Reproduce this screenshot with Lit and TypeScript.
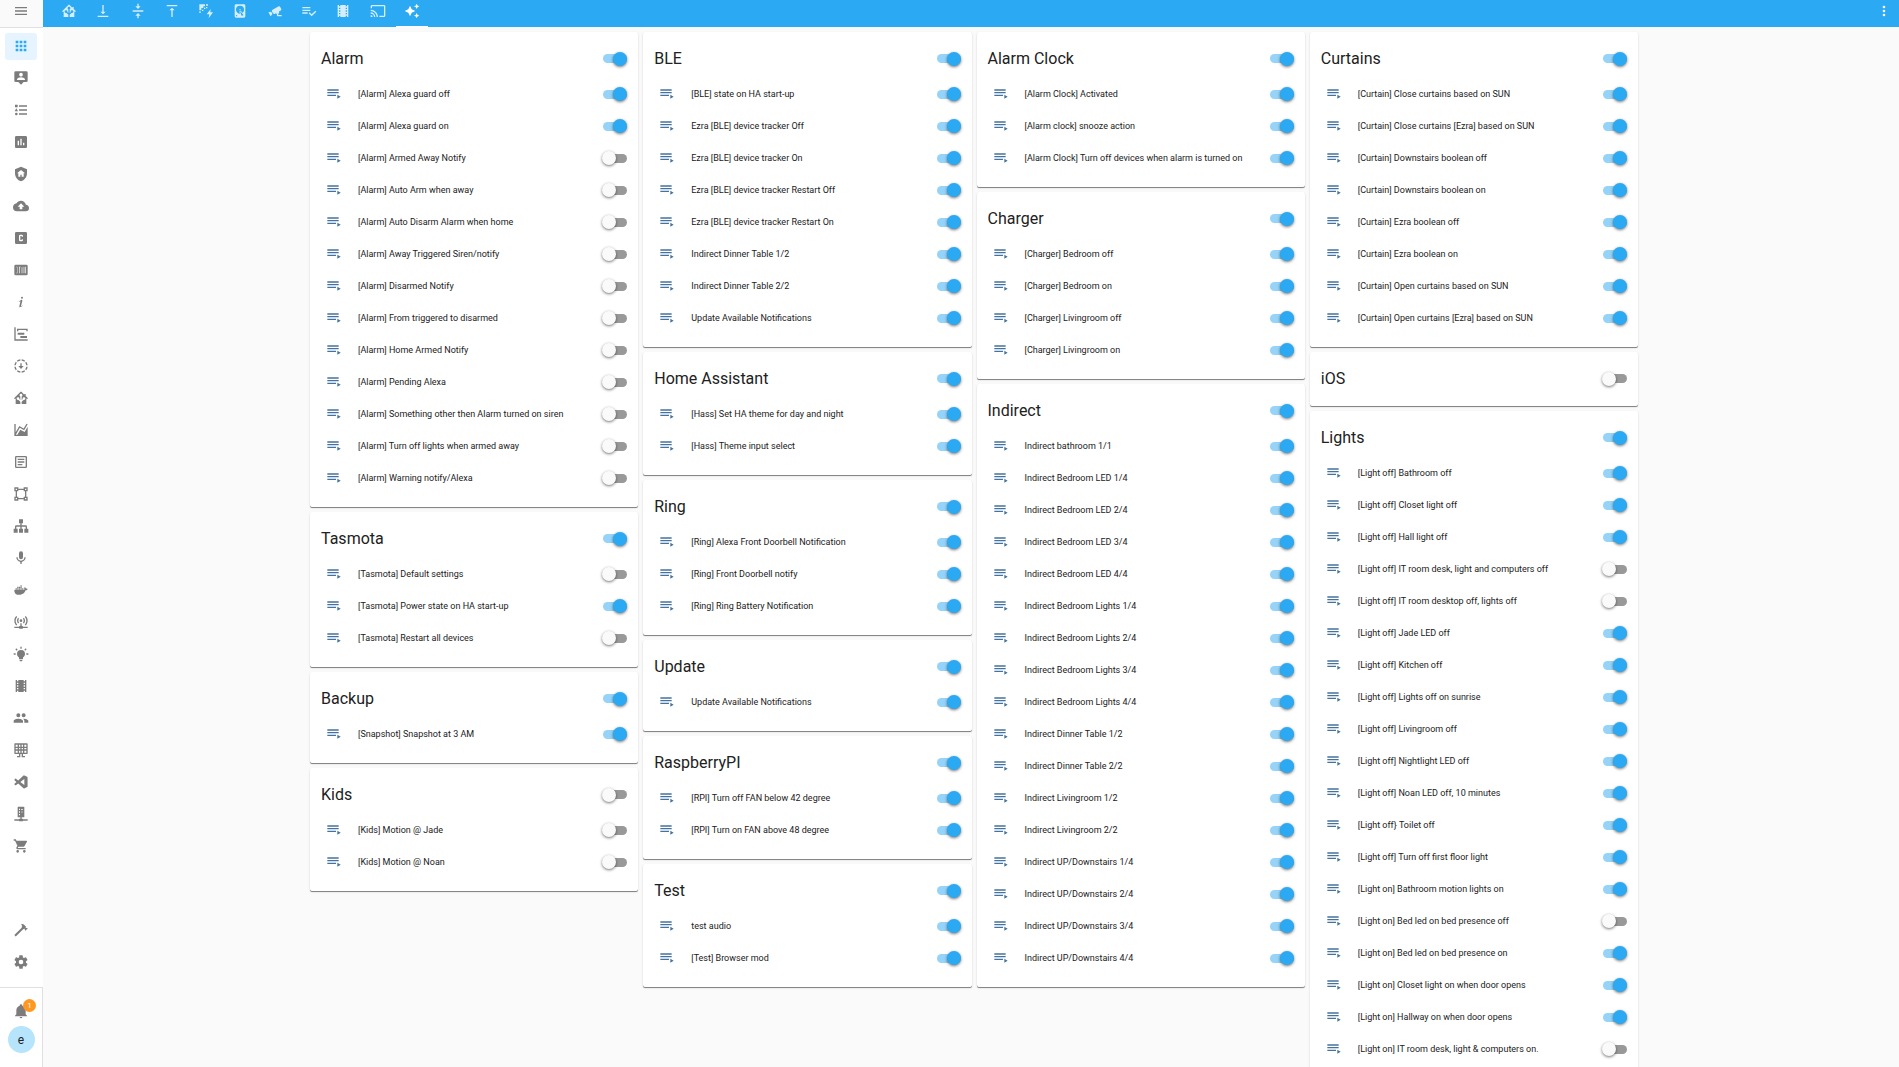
import { LitElement, html, css, svg } from "lit";
import { customElement, property, state } from "lit/decorators.js";

/* 24-unit icon shapes, keyed by name. */
const ICONS: Record<string, string> = {
  menu: "M3,6H21V8H3V6M3,11H21V13H3V11M3,16H21V18H3V16Z",
  apps: "M16,20H20V16H16M16,14H20V10H16M10,8H14V4H10M16,8H20V4H16M10,14H14V10H10M4,14H8V10H4M4,20H8V16H4M10,20H14V16H10M4,8H8V4H4V8Z",
  map: "M20,2H4A2,2 0 0,0 2,4V16A2,2 0 0,0 4,18H8L12,22L16,18H20A2,2 0 0,0 22,16V4A2,2 0 0,0 20,2M12,4.3C13.5,4.3 14.7,5.5 14.7,7C14.7,8.5 13.5,9.7 12,9.7C10.5,9.7 9.3,8.5 9.3,7C9.3,5.5 10.5,4.3 12,4.3M18,15H6V14.1C6,12.1 10,11 12,11C14,11 18,12.1 18,14.1V15Z",
  logbook: "M5,9.5L7.5,14H2.5L5,9.5M3,4H7V8H3V4M5,20A2,2 0 0,0 7,18A2,2 0 0,0 5,16A2,2 0 0,0 3,18A2,2 0 0,0 5,20M9,5V7H21V5H9M9,19H21V17H9V19M9,13H21V11H9V13Z",
  history: "M9,17H7V10H9V17M13,17H11V7H13V17M17,17H15V13H17V17M19,3H5C3.9,3 3,3.9 3,5V19C3,20.1 3.9,21 5,21H19C20.1,21 21,20.1 21,19V5C21,3.9 20.1,3 19,3Z",
  shield: "M11,13H13V16H16V11H18L12,6L6,11H8V16H11V13M12,1L21,5V11C21,16.55 17.16,21.74 12,23C6.84,21.74 3,16.55 3,11V5L12,1Z",
  upload: "M14,13V17H10V13H7L12,8L17,13H14M19.35,10.03C18.67,6.59 15.64,4 12,4C9.11,4 6.6,5.64 5.35,8.03C2.34,8.36 0,10.9 0,14A6,6 0 0,0 6,20H19A5,5 0 0,0 24,15C24,12.36 21.95,10.22 19.35,10.03Z",
  cbox: "M3,5A2,2 0 0,1 5,3H19A2,2 0 0,1 21,5V19A2,2 0 0,1 19,21H5A2,2 0 0,1 3,19V5M11,7A2,2 0 0,0 9,9V15A2,2 0 0,0 11,17H13A2,2 0 0,0 15,15V14H13V15H11V9H13V10H15V9A2,2 0 0,0 13,7H11Z",
  counter: "M4,4H20A2,2 0 0,1 22,6V18A2,2 0 0,1 20,20H4A2,2 0 0,1 2,18V6A2,2 0 0,1 4,4M5,7V8H6V16H5V17H6.6V7H5M9,7V17H10V8H11.4V7H9M13,7V17H14V8H13M16,7V17H17V7H16M18.4,7V17H19.4V7H18.4Z",
  info: "M13.5,4A1.5,1.5 0 0,0 12,5.5A1.5,1.5 0 0,0 13.5,7A1.5,1.5 0 0,0 15,5.5A1.5,1.5 0 0,0 13.5,4M13.14,8.77C11.95,8.87 8.7,11.46 8.7,11.46C8.5,11.61 8.56,11.6 8.72,11.88C8.88,12.15 8.86,12.17 9.05,12.04C9.25,11.91 9.58,11.7 10.13,11.36C12.25,10 10.47,13.14 9.56,18.43C9.2,21.05 11.56,19.7 12.17,19.3C12.77,18.91 14.38,17.8 14.54,17.69C14.76,17.54 14.6,17.42 14.43,17.17C14.31,17 14.19,17.12 14.19,17.12C13.54,17.55 12.35,18.45 12.19,17.88C12,17.31 13.22,13.4 13.89,10.71C14,10.07 14.3,8.67 13.14,8.77Z",
  gantt: "M2,2H4V20H22V22H2V2M7,10H17V13H7V10M11,15H21V18H11V15M6,4H22V8H20V6H8V8H6V4Z",
  progress: "M13,2.05V4.06C14.4,4.24 15.7,4.8 16.86,5.65L18.28,4.22C16.8,3 15,2.25 13,2.05M11,2.05C9,2.25 7.2,3 5.68,4.24L7.1,5.67C8.25,4.8 9.6,4.24 11,4.06V2.05M19.74,5.7L18.32,7.1C19.2,8.25 19.76,9.6 19.94,11H21.95C21.75,9 21,7.2 19.74,5.7M4.26,5.7C3,7.2 2.25,9 2.05,11H4.06C4.24,9.6 4.8,8.25 5.68,7.1L4.26,5.7M2.05,13C2.25,15 3,16.8 4.26,18.3L5.68,16.9C4.8,15.75 4.24,14.4 4.06,13H2.05M19.94,13C19.76,14.4 19.2,15.75 18.32,16.9L19.74,18.3C21,16.8 21.75,15 21.95,13H19.94M7.1,18.33L5.68,19.76C7.2,21 9,21.75 11,21.95V19.94C9.6,19.76 8.25,19.2 7.1,18.33M16.9,18.33C15.75,19.2 14.4,19.76 13,19.94V21.95C15,21.75 16.8,21 18.32,19.76L16.9,18.33M12,16.5L16,12H13V8H11V12H8L12,16.5Z",
  home: "M21.8,13H20V21H13V17.67L15.79,14.88L16.5,15C17.66,15 18.6,14.06 18.6,12.9C18.6,11.74 17.66,10.8 16.5,10.8A2.1,2.1 0 0,0 14.4,12.9L14.5,13.61L13,15.13V9.65C13.66,9.29 14.1,8.6 14.1,7.8A2.1,2.1 0 0,0 12,5.7A2.1,2.1 0 0,0 9.9,7.8C9.9,8.6 10.34,9.29 11,9.65V15.13L9.5,13.61L9.6,12.9A2.1,2.1 0 0,0 7.5,10.8A2.1,2.1 0 0,0 5.4,12.9A2.1,2.1 0 0,0 7.5,15L8.21,14.88L11,17.67V21H4V13H2.25C1.83,13 1.42,13 1.42,12.79C1.43,12.57 1.85,12.15 2.28,11.72L11,3C11.33,2.67 11.67,2.33 12,2.33C12.33,2.33 12.67,2.67 13,3L17,7V6H19V9L21.78,11.78C22.18,12.18 22.59,12.59 22.6,12.8C22.6,13 22.2,13 21.8,13Z",
  area: "M17.45,15.18L22,7.31V21H2V3H4V15.54L9.5,6L16,9.78L20.24,2.45L21.97,3.45L16.74,12.5L10.23,8.75L4.31,19H6.57L10.96,11.44L17.45,15.18Z",
  text: "M19,5V19H5V5H19M19,3H5A2,2 0 0,0 3,5V19A2,2 0 0,0 5,21H19A2,2 0 0,0 21,19V5A2,2 0 0,0 19,3M7,7H17V9H7V7M7,11H17V13H7V11M7,15H14V17H7V15Z",
  vector: "M2,2H8V4H16V2H22V8H20V16H22V22H16V20H8V22H2V16H4V8H2V2M16,8V6H8V8H6V16H8V18H16V16H18V8H16M4,4V6H6V4H4M18,4V6H20V4H18M4,18V20H6V18H4M18,18V20H20V18H18Z",
  sitemap: "M9,2V8H11V11H5C3.89,11 3,11.89 3,13V16H1V22H7V16H5V13H11V16H9V22H15V16H13V13H19V16H17V22H23V16H21V13C21,11.89 20.11,11 19,11H13V8H15V2H9Z",
  mic: "M12,2A3,3 0 0,1 15,5V11A3,3 0 0,1 12,14A3,3 0 0,1 9,11V5A3,3 0 0,1 12,2M19,11C19,14.53 16.39,17.44 13,17.93V21H11V17.93C7.61,17.44 5,14.53 5,11H7A5,5 0 0,0 12,16A5,5 0 0,0 17,11H19Z",
  docker: "M21.81,10.25C21.75,10.21 21.25,9.82 20.17,9.82C19.89,9.82 19.61,9.85 19.33,9.9C19.12,8.5 17.95,7.79 17.9,7.76L17.61,7.59L17.43,7.86C17.19,8.22 17,8.63 16.92,9.05C16.72,9.85 16.84,10.61 17.25,11.26C16.76,11.54 15.96,11.61 15.79,11.61H2.62C2.28,11.61 2,11.89 2,12.24C2,13.39 2.18,14.54 2.58,15.62C3.03,16.81 3.71,17.69 4.58,18.23C5.56,18.83 7.17,19.17 9,19.17C9.79,19.17 10.61,19.1 11.42,18.95C12.54,18.75 13.62,18.36 14.61,17.79C15.43,17.32 16.16,16.72 16.78,16C17.82,14.83 18.43,13.5 18.9,12.35H19.09C20.23,12.35 20.94,11.89 21.33,11.5C21.59,11.26 21.78,10.97 21.92,10.63L22,10.39L21.81,10.25M3.85,9.5H5.77V11.24H3.85V9.5M6.3,9.5H8.2V11.24H6.3V9.5M8.75,9.5H10.7V11.24H8.75V9.5M11.2,9.5H13.1V11.24H11.2V9.5M13.65,9.5H15.6V11.24H13.65V9.5M6.3,7.2H8.2V9H6.3V7.2M8.75,7.2H10.7V9H8.75V7.2M11.2,7.2H13.1V9H11.2V7.2M11.2,4.9H13.1V6.7H11.2V4.9Z",
  access: "M4.93,2.93C3.12,4.74 2,7.24 2,10C2,12.76 3.12,15.26 4.93,17.07L6.34,15.66C4.89,14.22 4,12.22 4,10C4,7.79 4.89,5.78 6.34,4.34L4.93,2.93M19.07,2.93L17.66,4.34C19.11,5.78 20,7.79 20,10C20,12.22 19.11,14.22 17.66,15.66L19.07,17.07C20.88,15.26 22,12.76 22,10C22,7.24 20.88,4.74 19.07,2.93M7.76,5.76C6.67,6.85 6,8.35 6,10C6,11.65 6.67,13.15 7.76,14.24L9.17,12.83C8.45,12.11 8,11.11 8,10C8,8.89 8.45,7.89 9.17,7.17L7.76,5.76M16.24,5.76L14.83,7.17C15.55,7.89 16,8.89 16,10C16,11.11 15.55,12.11 14.83,12.83L16.24,14.24C17.33,13.15 18,11.65 18,10C18,8.35 17.33,6.85 16.24,5.76M12,8A2,2 0 0,0 10,10A2,2 0 0,0 12,12A2,2 0 0,0 14,10A2,2 0 0,0 12,8M11,14V18H10A1,1 0 0,0 9,19H2V21H9A1,1 0 0,0 10,22H14A1,1 0 0,0 15,21H22V19H15A1,1 0 0,0 14,18H13V14H11Z",
  bulb: "M12,6A6,6 0 0,1 18,12C18,14.22 16.79,16.16 15,17.2V19A1,1 0 0,1 14,20H10A1,1 0 0,1 9,19V17.2C7.21,16.16 6,14.22 6,12A6,6 0 0,1 12,6M14,21V22A1,1 0 0,1 13,23H11A1,1 0 0,1 10,22V21H14M20,11H23V13H20V11M1,11H4V13H1V11M13,1V4H11V1H13M4.92,3.5L7.05,5.64L5.63,7.05L3.5,4.93L4.92,3.5M16.95,5.63L19.07,3.5L20.5,4.93L18.37,7.05L16.95,5.63Z",
  film: "M18,9H16V7H18M18,13H16V11H18M18,17H16V15H18M8,9H6V7H8M8,13H6V11H8M8,17H6V15H8M18,3V5H16V3H8V5H6V3H4V21H6V19H8V21H16V19H18V21H20V3H18Z",
  people: "M16,13C15.71,13 15.38,13 15.03,13.05C16.19,13.89 17,15 17,16.5V19H23V16.5C23,14.17 18.33,13 16,13M8,13C5.67,13 1,14.17 1,16.5V19H15V16.5C15,14.17 10.33,13 8,13M8,11A3,3 0 0,0 11,8A3,3 0 0,0 8,5A3,3 0 0,0 5,8A3,3 0 0,0 8,11M16,11A3,3 0 0,0 19,8A3,3 0 0,0 16,5A3,3 0 0,0 13,8A3,3 0 0,0 16,11Z",
  solar: "M3,2H21A1,1 0 0,1 22,3V17A1,1 0 0,1 21,18H15V21H18V23H13V18H11V23H6V21H9V18H3A1,1 0 0,1 2,17V3A1,1 0 0,1 3,2M4,4V7H7V4H4M9,4V7H11V4H9M13,4V7H15V4H13M17,4V7H20V4H17M4,9V11H7V9H4M9,9V11H11V9H9M13,9V11H15V9H13M17,9V11H20V9H17M4,13V16H7V13H4M9,13V16H11V13H9M13,13V16H15V13H13M17,13V16H20V13H17Z",
  code: "M17,16.47V7.39L11,11.93L17,16.47M2.22,9.19C1.91,8.91 1.93,8.41 2.21,8.13L3.41,7.03C3.61,6.85 4.05,6.76 4.37,7L7.78,9.6L15.68,2.38C16,2.06 16.55,1.93 17.18,2.26L21.16,4.16C21.52,4.37 21.86,4.7 21.86,5.3V18.6C21.86,19 21.57,19.42 21.26,19.59L16.88,21.69C16.56,21.82 15.96,21.7 15.75,21.48L7.76,14.2L4.37,16.8C4.03,17.03 3.61,16.96 3.41,16.77L2.21,15.67C1.89,15.34 1.93,14.8 2.26,14.5L5.26,11.9L2.22,9.19Z",
  nas: "M8,1H16A1,1 0 0,1 17,2V16A1,1 0 0,1 16,17H13V19H14A1,1 0 0,1 15,20H22V22H15A1,1 0 0,1 14,23H10A1,1 0 0,1 9,22H2V20H9A1,1 0 0,1 10,19H11V17H8A1,1 0 0,1 7,16V2A1,1 0 0,1 8,1M9,4V6H10.5V4H9M12,4.5V5.5H15V4.5H12M9,8V10H10.5V8H9M12,8.5V9.5H15V8.5H12M9,12V14H10.5V12H9Z",
  cart: "M17,18A2,2 0 0,1 19,20A2,2 0 0,1 17,22C15.89,22 15,21.1 15,20C15,18.89 15.89,18 17,18M1,2H4.27L5.21,4H20A1,1 0 0,1 21,5C21,5.17 20.95,5.34 20.88,5.5L17.3,11.97C16.96,12.58 16.3,13 15.55,13H8.1L7.2,14.63L7.17,14.75A0.25,0.25 0 0,0 7.42,15H19V17H7C5.89,17 5,16.1 5,15C5,14.65 5.09,14.32 5.24,14.04L6.6,11.59L3,4H1V2M7,18A2,2 0 0,1 9,20A2,2 0 0,1 7,22C5.89,22 5,21.1 5,20C5,18.89 5.89,18 7,18Z",
  hammer: "M2,19.63L13.43,8.2L12.72,7.5L14.14,6.07L12,3.89C13.2,2.7 15.09,2.7 16.27,3.89L19.87,7.5L18.45,8.91H21.29L22,9.62L18.45,13.21L17.74,12.5V9.62L16.27,11.04L15.56,10.33L4.13,21.76L2,19.63Z",
  cog: "M12,15.5A3.5,3.5 0 0,1 8.5,12A3.5,3.5 0 0,1 12,8.5A3.5,3.5 0 0,1 15.5,12A3.5,3.5 0 0,1 12,15.5M19.43,12.97C19.47,12.65 19.5,12.33 19.5,12C19.5,11.67 19.47,11.34 19.43,11L21.54,9.37C21.73,9.22 21.78,8.95 21.66,8.73L19.66,5.27C19.54,5.05 19.27,4.96 19.05,5.05L16.56,6.05C16.04,5.66 15.5,5.32 14.87,5.07L14.5,2.42C14.46,2.18 14.25,2 14,2H10C9.75,2 9.54,2.18 9.5,2.42L9.13,5.07C8.5,5.32 7.96,5.66 7.44,6.05L4.95,5.05C4.73,4.96 4.46,5.05 4.34,5.27L2.34,8.73C2.21,8.95 2.27,9.22 2.46,9.37L4.57,11C4.53,11.34 4.5,11.67 4.5,12C4.5,12.33 4.53,12.65 4.57,12.97L2.46,14.63C2.27,14.78 2.21,15.05 2.34,15.27L4.34,18.73C4.46,18.95 4.73,19.03 4.95,18.95L7.44,17.94C7.96,18.34 8.5,18.68 9.13,18.93L9.5,21.58C9.54,21.82 9.75,22 10,22H14C14.25,22 14.46,21.82 14.5,21.58L14.87,18.93C15.5,18.67 16.04,18.34 16.56,17.94L19.05,18.95C19.27,19.03 19.54,18.95 19.66,18.73L21.66,15.27C21.78,15.05 21.73,14.78 21.54,14.63L19.43,12.97Z",
  bell: "M21,19V20H3V19L5,17V11C5,7.9 7.03,5.17 10,4.29C10,4.19 10,4.1 10,4A2,2 0 0,1 12,2A2,2 0 0,1 14,4C14,4.1 14,4.19 14,4.29C16.97,5.17 19,7.9 19,11V17L21,19M14,21A2,2 0 0,1 12,23A2,2 0 0,1 10,21H14Z",
  alignBottom: "M16,13H13V3H11V13H8L12,17L16,13M4,19V21H20V19H4Z",
  alignCenter: "M8,19H11V23H13V19H16L12,15L8,19M16,5H13V1H11V5H8L12,9L16,5M4,11V13H20V11H4Z",
  alignTop: "M8,11H11V21H13V11H16L12,7L8,11M4,3V5H20V3H4Z",
  power: "M2,2H10.5V5H8V7.5H5V11H2V2M12,2H15V4H12V2M9,7H11V9H9V7M6,10H8V12H6V10M2,12.5H4V15H2V12.5M12,6H14V8H12V6M19,9L13,17H17L16,23L22.5,14H18.5L19,9Z",
  disk: "M6,2H18A2,2 0 0,1 20,4V20A2,2 0 0,1 18,22H6A2,2 0 0,1 4,20V4A2,2 0 0,1 6,2M12,4A6,6 0 0,0 6,10C6,13.31 8.69,16 12.1,16L11.22,13.77C10.95,13.29 11.11,12.68 11.59,12.4L12.45,11.9C12.93,11.63 13.54,11.79 13.82,12.27L15.74,14.69C17.12,13.59 18,11.9 18,10A6,6 0 0,0 12,4M12,9A1,1 0 0,1 13,10A1,1 0 0,1 12,11A1,1 0 0,1 11,10A1,1 0 0,1 12,9M7,18A1,1 0 0,0 6,19A1,1 0 0,0 7,20A1,1 0 0,0 8,19A1,1 0 0,0 7,18M12.09,13.27L14.58,19.58L17.17,18.08L12.95,12.77L12.09,13.27Z",
  cctv: "M18.15,4.94C17.77,4.91 17.37,5 17,5.2L8.35,10.2C7.39,10.76 7.07,12 7.62,12.94L9.12,15.53C9.67,16.5 10.89,16.82 11.85,16.27L13.65,15.23C13.92,15.69 14.32,16.06 14.81,16.27V18.04C14.81,19.13 15.7,20 16.81,20H22V18.04H16.81V16.27C17.72,15.87 18.31,14.97 18.31,14C18.31,13.54 18.19,13.11 17.97,12.73L20.5,11.27C21.47,10.71 21.8,9.5 21.24,8.53L19.74,5.94C19.4,5.34 18.79,5 18.15,4.94M6.22,13.17L2,13.87L2.75,15.17L4.75,18.63L5.5,19.93L8.22,16.63L6.22,13.17Z",
  check: "M14,10H2V12H14V10M14,6H2V8H14V6M2,16H10V14H2V16M21.5,11.5L23,13L16,20L11.5,15.5L13,14L16,17L21.5,11.5Z",
  cast: "M1,10V12A9,9 0 0,1 10,21H12C12,14.92 7.07,10 1,10M1,14V16A5,5 0 0,1 6,21H8A7,7 0 0,0 1,14M1,18V21H4A3,3 0 0,0 1,18M21,3H3C1.89,3 1,3.89 1,5V8H3V5H21V19H14V21H21A2,2 0 0,0 23,19V5C23,3.89 22.1,3 21,3Z",
  creation: "M19,1L17.74,3.75L15,5L17.74,6.26L19,9L20.25,6.26L23,5L20.25,3.75M9,4L6.5,9.5L1,12L6.5,14.5L9,20L11.5,14.5L17,12L11.5,9.5M19,15L17.74,17.74L15,19L17.74,20.25L19,23L20.25,20.25L23,19L20.25,17.74",
  dots: "M12,16A2,2 0 0,1 14,18A2,2 0 0,1 12,20A2,2 0 0,1 10,18A2,2 0 0,1 12,16M12,10A2,2 0 0,1 14,12A2,2 0 0,1 12,14A2,2 0 0,1 10,12A2,2 0 0,1 12,10M12,4A2,2 0 0,1 14,6A2,2 0 0,1 12,8A2,2 0 0,1 10,6A2,2 0 0,1 12,4Z",
  playlist: "M19,9H2V11H19V9M19,5H2V7H19V5M2,15H15V13H2V15M17,13V19L22,16L17,13Z",
};

const icon = (name: string) => html`<svg class="icon" viewBox="0 0 24 24" width="16" height="16" aria-hidden="true">
  ${svg`<path fill="currentColor" fill-rule="evenodd" d=${ICONS[name]}></path>`}
</svg>`;

interface Item { name: string; on: boolean }
interface Group { title: string; on: boolean; items: Item[] }

/* A leading "-" marks an entry that is switched off. */
const entry = (s: string): Item => s.startsWith("-") ? { name: s.slice(1), on: false } : { name: s, on: true };
const group = (title: string, ...names: string[]): Group => {
  const head = entry(title);
  return { title: head.name, on: head.on, items: names.map(entry) };
};

const COLUMNS: Group[][] = [
  [
    group("Alarm", "[Alarm] Alexa guard off", "[Alarm] Alexa guard on", "-[Alarm] Armed Away Notify",
      "-[Alarm] Auto Arm when away", "-[Alarm] Auto Disarm Alarm when home", "-[Alarm] Away Triggered Siren/notify",
      "-[Alarm] Disarmed Notify", "-[Alarm] From triggered to disarmed", "-[Alarm] Home Armed Notify",
      "-[Alarm] Pending Alexa", "-[Alarm] Something other then Alarm turned on siren",
      "-[Alarm] Turn off lights when armed away", "-[Alarm] Warning notify/Alexa"),
    group("Tasmota", "-[Tasmota] Default settings", "[Tasmota] Power state on HA start-up", "-[Tasmota] Restart all devices"),
    group("Backup", "[Snapshot] Snapshot at 3 AM"),
    group("-Kids", "-[Kids] Motion @ Jade", "-[Kids] Motion @ Noan"),
  ],
  [
    group("BLE", "[BLE] state on HA start-up", "Ezra [BLE] device tracker Off", "Ezra [BLE] device tracker On",
      "Ezra [BLE] device tracker Restart Off", "Ezra [BLE] device tracker Restart On", "Indirect Dinner Table 1/2",
      "Indirect Dinner Table 2/2", "Update Available Notifications"),
    group("Home Assistant", "[Hass] Set HA theme for day and night", "[Hass] Theme input select"),
    group("Ring", "[Ring] Alexa Front Doorbell Notification", "[Ring] Front Doorbell notify", "[Ring] Ring Battery Notification"),
    group("Update", "Update Available Notifications"),
    group("RaspberryPI", "[RPI] Turn off FAN below 42 degree", "[RPI] Turn on FAN above 48 degree"),
    group("Test", "test audio", "[Test] Browser mod"),
  ],
  [
    group("Alarm Clock", "[Alarm Clock] Activated", "[Alarm clock] snooze action", "[Alarm Clock] Turn off devices when alarm is turned on"),
    group("Charger", "[Charger] Bedroom off", "[Charger] Bedroom on", "[Charger] Livingroom off", "[Charger] Livingroom on"),
    group("Indirect", "Indirect bathroom 1/1", "Indirect Bedroom LED 1/4", "Indirect Bedroom LED 2/4", "Indirect Bedroom LED 3/4",
      "Indirect Bedroom LED 4/4", "Indirect Bedroom Lights 1/4", "Indirect Bedroom Lights 2/4", "Indirect Bedroom Lights 3/4",
      "Indirect Bedroom Lights 4/4", "Indirect Dinner Table 1/2", "Indirect Dinner Table 2/2", "Indirect Livingroom 1/2",
      "Indirect Livingroom 2/2", "Indirect UP/Downstairs 1/4", "Indirect UP/Downstairs 2/4", "Indirect UP/Downstairs 3/4",
      "Indirect UP/Downstairs 4/4"),
  ],
  [
    group("Curtains", "[Curtain] Close curtains based on SUN", "[Curtain] Close curtains [Ezra] based on SUN",
      "[Curtain] Downstairs boolean off", "[Curtain] Downstairs boolean on", "[Curtain] Ezra boolean off",
      "[Curtain] Ezra boolean on", "[Curtain] Open curtains based on SUN", "[Curtain] Open curtains [Ezra] based on SUN"),
    group("-iOS"),
    group("Lights", "[Light off] Bathroom off", "[Light off] Closet light off", "[Light off] Hall light off",
      "-[Light off] IT room desk, light and computers off", "-[Light off] IT room desktop off, lights off",
      "[Light off] Jade LED off", "[Light off] Kitchen off", "[Light off] Lights off on sunrise", "[Light off] Livingroom off",
      "[Light off] Nightlight LED off", "[Light off] Noan LED off, 10 minutes", "[Light off} Toilet off",
      "[Light off] Turn off first floor light", "[Light on] Bathroom motion lights on", "-[Light on] Bed led on bed presence off",
      "[Light on] Bed led on bed presence on", "[Light on] Closet light on when door opens", "[Light on] Hallway on when door opens",
      "-[Light on] IT room desk, light & computers on."),
  ],
];

@customElement("switch-card")
class SwitchCard extends LitElement {
  @property({ attribute: false }) group!: Group;

  static styles = css`
    :host { display: block; }
    .card {
      background: #fff;
      border-radius: 2px;
      padding: 7px 11px 8px 11px;
      box-shadow: 0 1px 0 rgba(0, 0, 0, .38), 0 1px 2px rgba(0, 0, 0, .18);
    }
    .head, .row { display: flex; align-items: center; justify-content: space-between; }
    .head { height: 39px; }
    .title { margin: 0; font-size: 16px; line-height: 24px; font-weight: 400; color: #212121; }
    .rows { list-style: none; margin: 0; padding: 0 0 5px; display: flex; flex-direction: column; }
    .row { height: 32px; }
    .name { flex: 1; min-width: 0; display: flex; align-items: center; gap: 16px; padding-left: 5px; font-size: 9px; line-height: 16px; color: #212121; }
    .icon { color: #44739e; flex: none; }
    .switch {
      appearance: none;
      flex: none;
      display: flex;
      align-items: center;
      width: 24px;
      height: 9px;
      margin: 0;
      border-radius: 5px;
      background: #999;
      cursor: pointer;
    }
    .switch::before {
      content: "";
      flex: none;
      width: 14px;
      height: 14px;
      margin-left: -1px;
      border-radius: 50%;
      background: #fafafa;
      box-shadow: 0 1px 3px rgba(0, 0, 0, .55);
    }
    .switch:checked { background: #95d3f8; }
    .switch:checked::before { margin-left: 10px; background: #2ba9f2; }
  `;

  render() {
    const g = this.group;
    return html`<section class="card">
      <header class="head">
        <h2 class="title"><label for="all">${g.title}</label></h2>
        <input class="switch" id="all" type="checkbox" role="switch" .checked=${g.on}>
      </header>
      ${g.items.length ? html`<ul class="rows">
        ${g.items.map((item, i) => html`<li class="row">
          <label class="name" for="s${i}">${icon("playlist")}<span>${item.name}</span></label>
          <input class="switch" id="s${i}" type="checkbox" role="switch" .checked=${item.on}>
        </li>`)}
      </ul>` : null}
    </section>`;
  }
}

const SIDE: [string, string][] = [
  ["apps", "Overview"], ["map", "Map"], ["logbook", "Logbook"], ["history", "History"], ["shield", "Alarm"],
  ["upload", "Backup"], ["cbox", "Configurator"], ["counter", "Counter"], ["info", "Info"], ["gantt", "Timeline"],
  ["progress", "Downloads"], ["home", "Home"], ["area", "Graphs"], ["text", "Log"], ["vector", "Nodes"],
  ["sitemap", "Network"], ["mic", "Voice"], ["docker", "Containers"], ["access", "Access point"], ["bulb", "Lights"],
  ["film", "Media"], ["people", "People"], ["solar", "Solar"], ["code", "Code"], ["nas", "Storage"], ["cart", "Shopping"],
];

const TABS: [string, string][] = [
  ["home", "Home"], ["alignBottom", "Ground floor"], ["alignCenter", "First floor"], ["alignTop", "Top floor"],
  ["power", "Energy"], ["disk", "System"], ["cctv", "Cameras"], ["check", "Tasks"], ["film", "Media"],
  ["cast", "Cast"], ["creation", "Automations"],
];

@customElement("app-root")
class AppRoot extends LitElement {
  @state() private tab = TABS.length - 1;

  static styles = css`
    :host {
      display: grid;
      grid-template-columns: 43px 1fr;
      height: 100vh;
      overflow: hidden;
      background: #fafafa;
      font-family: Roboto, "Liberation Sans", sans-serif;
      color: #212121;
    }
    button { appearance: none; border: 0; margin: 0; padding: 0; background: none; color: inherit; font: inherit; cursor: pointer; }
    .icon { display: block; flex: none; }

    .side { display: flex; flex-direction: column; min-height: 0; background: #fff; color: #7c7c7c; }
    .menu { flex: none; display: flex; align-items: center; justify-content: center; height: 28px; padding: 0 1px 5px 0; box-sizing: border-box; border-bottom: 1px solid #e0e0e0; background: #fafafa; }
    .links { flex: 1; display: flex; flex-direction: column; gap: 5px; padding: 5px 6px 5px 5px; }
    .link { flex: none; display: flex; align-items: center; justify-content: center; box-sizing: border-box; height: 27px; padding-bottom: 1px; border-radius: 3px; color: inherit; }
    .link.active { background: #e5f4fe; color: #2ba9f2; }
    .tools { margin-top: auto; display: flex; flex-direction: column; gap: 5px; padding-bottom: 6px; }
    .foot { flex: none; display: flex; flex-direction: column; align-items: center; gap: 3px; padding: 11px 0 14px; border-top: 1px solid #e0e0e0; border-right: 1px solid #e0e0e0; }
    .bell { position: relative; display: flex; padding: 4px 0; }
    .badge { position: absolute; left: 10px; top: 0; width: 13px; height: 13px; border-radius: 50%; background: #ff9821; color: #fff; font-size: 8px; line-height: 13px; text-align: center; }
    .avatar { width: 27px; height: 27px; border-radius: 50%; background: #b5e4fc; color: #212121; font-size: 12px; line-height: 26px; text-align: center; }

    .page { display: flex; flex-direction: column; min-width: 0; min-height: 0; }
    .bar { flex: none; display: flex; justify-content: space-between; height: 27px; padding: 0 7px 0 10px; background: #2ba9f2; color: #fff; }
    .tabs { display: flex; justify-content: space-between; width: 375px; }
    .tab { display: flex; justify-content: center; width: 32px; padding-top: 3px; border-bottom: 1px solid transparent; color: rgba(255, 255, 255, .8); }
    .tab.active { border-bottom-color: #fff; color: #fff; }
    .more { display: flex; padding-top: 3px; }
    .view { flex: 1; min-height: 0; overflow: auto; scrollbar-width: none; padding: 5px 0 5px 6px; }
    .columns { display: grid; grid-template-columns: repeat(4, minmax(0, 1fr)); gap: 5px; align-items: start; max-width: 1328px; margin: 0 auto; }
    .column { display: flex; flex-direction: column; gap: 5px; }
  `;

  render() {
    return html`
      <aside class="side">
        <button class="menu" aria-label="Menu">${icon("menu")}</button>
        <nav class="links">
          ${SIDE.map(([name, label], i) => html`<a class="link ${i === 0 ? "active" : ""}" href="#${name}" aria-label=${label}>${icon(name)}</a>`)}
          <div class="tools">
            <a class="link" href="#tools" aria-label="Developer tools">${icon("hammer")}</a>
            <a class="link" href="#config" aria-label="Configuration">${icon("cog")}</a>
          </div>
        </nav>
        <div class="foot">
          <button class="bell" aria-label="Notifications">${icon("bell")}<span class="badge">1</span></button>
          <button class="avatar" aria-label="Profile">e</button>
        </div>
      </aside>
      <div class="page">
        <header class="bar">
          <nav class="tabs">
            ${TABS.map(([name, label], i) => html`<button class="tab ${i === this.tab ? "active" : ""}" aria-label=${label}
              @click=${() => { this.tab = i; }}>${icon(name)}</button>`)}
          </nav>
          <button class="more" aria-label="More options">${icon("dots")}</button>
        </header>
        <main class="view">
          <div class="columns">
            ${COLUMNS.map((cards) => html`<div class="column">
              ${cards.map((g) => html`<switch-card .group=${g}></switch-card>`)}
            </div>`)}
          </div>
        </main>
      </div>`;
  }
}
